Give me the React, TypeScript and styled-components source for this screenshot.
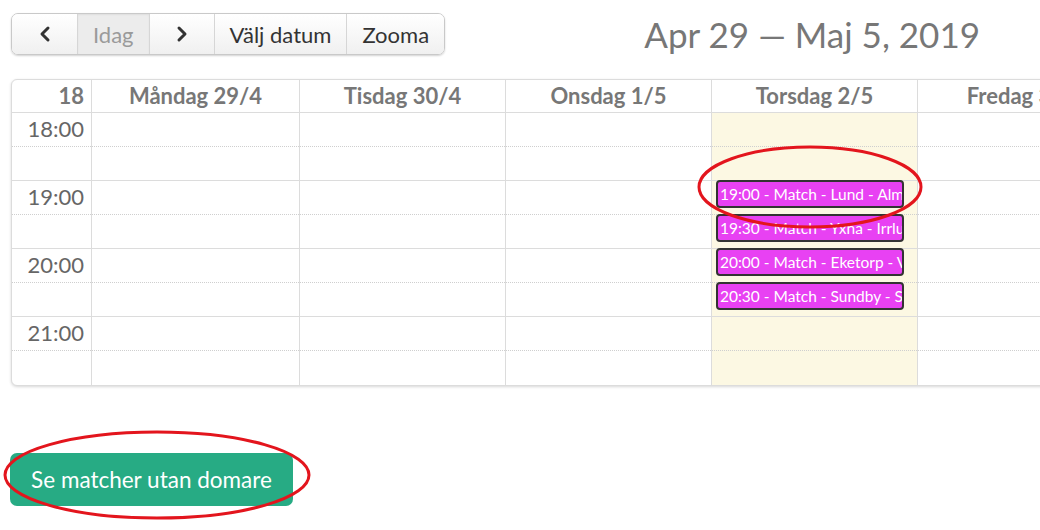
import React from "react";
import styled, { createGlobalStyle } from "styled-components";
import { ChevronLeft, ChevronRight } from "lucide-react";

const GlobalStyle = createGlobalStyle`
    html, body {
        margin: 0;
        padding: 0;
        background: #fff;
        overflow: hidden;
    }
    body {
        font-family: Lato, "Open Sans", "Liberation Sans", sans-serif;
    }
`;

const Page = styled.div`
    position: relative;
    width: 1040px;
    height: 530px;
    padding: 13px 0 0 11px;
    box-sizing: border-box;
    overflow: hidden;
`;

const TopBar = styled.div`
    display: flex;
    align-items: center;
    justify-content: space-between;
    width: 969px;
`;

const ButtonGroup = styled.div`
    display: inline-flex;
    border: 1px solid #c9c9c9;
    border-radius: 7px;
    box-shadow: 0 1px 2px rgba(0, 0, 0, 0.18);
    overflow: hidden;
`;

const ToolButton = styled.button<{ $active?: boolean; $icon?: boolean }>`
    display: flex;
    align-items: center;
    justify-content: center;
    height: 40px;
    width: ${(p) => (p.$icon ? "65px" : "auto")};
    padding: ${(p) => (p.$icon ? "0" : "0 15px")};
    margin: 0;
    border: none;
    border-left: 1px solid #d6d6d6;
    font-family: Lato, "Liberation Sans", sans-serif;
    font-size: 22px;
    color: ${(p) => (p.$active ? "#9a9a9a" : "#333")};
    background: ${(p) =>
        p.$active ? "#ececec" : "linear-gradient(#ffffff, #f0f0f0)"};
    box-shadow: ${(p) => (p.$active ? "inset 0 1px 2px rgba(0,0,0,0.06)" : "none")};
    cursor: pointer;

    &:first-child {
        border-left: none;
    }
`;

const Title = styled.h2`
    margin: 0;
    font-size: 35px;
    font-weight: 400;
    color: #777;
`;

const Calendar = styled.div`
    margin-top: 24px;
    width: 1400px;
    border: 1px solid #dcdcdc;
    border-radius: 6px;
    box-shadow: 0 1px 3px rgba(0, 0, 0, 0.16);
    overflow: hidden;
    background: #fff;
`;

const Grid = styled.div`
    display: grid;
    grid-template-columns: 80px 208px repeat(6, 206px);
`;

const HeaderCell = styled.div<{ $right?: boolean }>`
    height: 32px;
    line-height: 32px;
    border-right: 1px solid #dcdcdc;
    border-bottom: 1px solid #dcdcdc;
    font-size: 22px;
    font-weight: 700;
    color: #777;
    white-space: nowrap;
    text-align: ${(p) => (p.$right ? "right" : "center")};
    padding: ${(p) => (p.$right ? "0 7px 0 0" : "0")};
`;

const Column = styled.div<{ $today?: boolean }>`
    position: relative;
    border-right: 1px solid #dcdcdc;
    background: ${(p) => (p.$today ? "#fcf8e3" : "transparent")};
`;

const HalfSlot = styled.div<{ $half?: boolean; $last?: boolean }>`
    height: 33px;
    border-bottom: 1px ${(p) => (p.$half ? "dotted" : "solid")}
        ${(p) => (p.$last ? "transparent" : p.$half ? "#cfcfcf" : "#dcdcdc")};
`;

const TimeLabel = styled.div`
    font-size: 22px;
    color: #666;
    text-align: right;
    padding: 4px 7px 0 0;
    line-height: 24px;
`;

const EventStack = styled.div`
    position: absolute;
    top: 67px;
    left: 4px;
    right: 13px;
    display: flex;
    flex-direction: column;
    gap: 6px;
`;

const EventItem = styled.div`
    height: 24px;
    line-height: 24px;
    padding: 0 2px;
    background: #e841f3;
    border: 2px solid #333;
    border-radius: 4px;
    color: #fff;
    font-size: 15.5px;
    white-space: nowrap;
    overflow: hidden;
`;

const Footer = styled.div`
    margin-top: 67px;
`;

const GreenButton = styled.button`
    width: 283px;
    height: 53px;
    border: none;
    border-radius: 7px;
    background: #27ab84;
    color: #fff;
    font-family: Lato, "Liberation Sans", sans-serif;
    font-size: 22.5px;
    margin-left: -1px;
    cursor: pointer;
`;

const Marks = styled.svg`
    position: absolute;
    left: 0;
    top: 0;
    pointer-events: none;
`;

const days = [
    "Måndag 29/4",
    "Tisdag 30/4",
    "Onsdag 1/5",
    "Torsdag 2/5",
    "Fredag 3/5",
    "Lördag 4/5",
    "Söndag 5/5",
];

const hours = ["18:00", "19:00", "20:00", "21:00"];

const events = [
    "19:00 - Match - Lund - Almby",
    "19:30 - Match - Yxna - Irrlund",
    "20:00 - Match - Eketorp - Vivalla",
    "20:30 - Match - Sundby - Sörby",
];

const Slots: React.FC<{ labels?: boolean }> = ({ labels }) => (
    <>
        {hours.map((h, i) => (
            <React.Fragment key={h}>
                <HalfSlot $half>{labels && <TimeLabel>{h}</TimeLabel>}</HalfSlot>
                <HalfSlot $last={i === hours.length - 1} />
            </React.Fragment>
        ))}
    </>
);

export default function App() {
    return (
        <>
            <GlobalStyle />
            <Page>
                <TopBar>
                    <ButtonGroup>
                        <ToolButton $icon aria-label="Föregående">
                            <ChevronLeft size={24} strokeWidth={3} color="#333" />
                        </ToolButton>
                        <ToolButton $active>Idag</ToolButton>
                        <ToolButton $icon aria-label="Nästa">
                            <ChevronRight size={24} strokeWidth={3} color="#333" />
                        </ToolButton>
                        <ToolButton>Välj datum</ToolButton>
                        <ToolButton>Zooma</ToolButton>
                    </ButtonGroup>
                    <Title>Apr 29 — Maj 5, 2019</Title>
                </TopBar>

                <Calendar>
                    <Grid>
                        <HeaderCell $right>18</HeaderCell>
                        {days.map((d) => (
                            <HeaderCell key={d}>{d}</HeaderCell>
                        ))}

                        <Column>
                            <Slots labels />
                        </Column>
                        {days.map((d, i) => (
                            <Column key={d} $today={i === 3}>
                                <Slots />
                                {i === 3 && (
                                    <EventStack>
                                        {events.map((e) => (
                                            <EventItem key={e}>{e}</EventItem>
                                        ))}
                                    </EventStack>
                                )}
                            </Column>
                        ))}
                    </Grid>
                </Calendar>

                <Footer>
                    <GreenButton>Se matcher utan domare</GreenButton>
                </Footer>

                <Marks width="1040" height="530">
                    <ellipse cx="810" cy="187" rx="111" ry="40" fill="none" stroke="#e3151d" strokeWidth="3" />
                    <ellipse cx="157" cy="475" rx="152" ry="43" fill="none" stroke="#e3151d" strokeWidth="3" />
                </Marks>
            </Page>
        </>
    );
}
